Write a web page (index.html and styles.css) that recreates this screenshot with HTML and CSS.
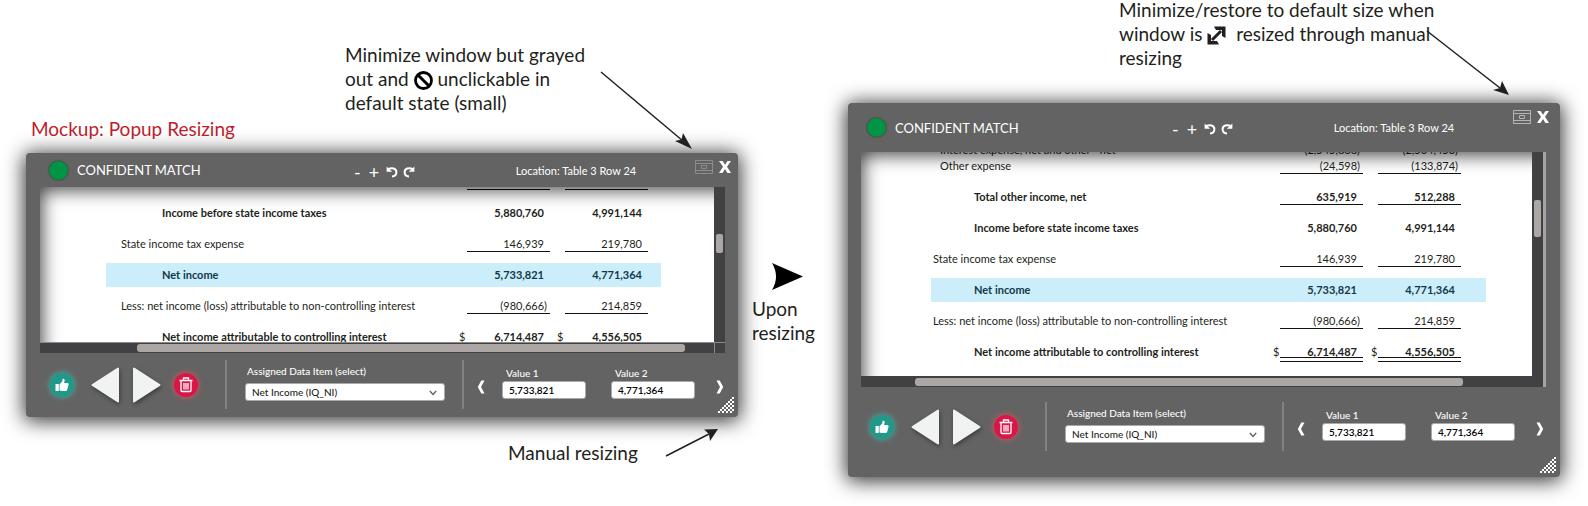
FILE: index.html
```html
<!DOCTYPE html>
<html lang="en">
<head>
<meta charset="utf-8">
<title>Mockup: Popup Resizing</title>
<link rel="stylesheet" href="styles.css">
</head>
<body>
<svg class="sprite" aria-hidden="true">
  <symbol id="undo" viewBox="0 0 12 12"><path d="M2 3.2C6 1.2 10.4 2.4 10.4 6.2 10.4 8.8 8.6 10.2 6 10.4" fill="none" stroke="currentColor" stroke-width="2"/><path d="M.6.6v5.2h5.6z" fill="currentColor"/></symbol>
  <symbol id="redo" viewBox="0 0 12 12"><path d="M10 3.2C6 1.2 1.6 2.4 1.6 6.2 1.6 8.8 3.4 10.2 6 10.4" fill="none" stroke="currentColor" stroke-width="2"/><path d="M11.4.6v5.2H5.8z" fill="currentColor"/></symbol>
  <symbol id="restore" viewBox="0 0 18 14"><path d="M.5.5h17v13H.5zM.5 3.500h17M.5 10.500h17M6.500 5.500h5v3h-5z" fill="none" stroke="currentColor"/></symbol>
  <symbol id="close" viewBox="0 0 12 12"><path d="M0 0h3.600L6 3.700 8.500 0H12L8 5.800 12 12H8.400L6 8 3.500 12H0l4-6.200z" fill="currentColor"/></symbol>
  <symbol id="thumb" viewBox="0 0 14 14"><path d="M.5 6h3.300v7H.5zM4.500 6.200 7.200 3.400 7.600.8C9 .2 10 1.400 9.600 3L9 5h3.300c1.300 0 1.500 1 1.200 2l-1.300 4.800c-.3.900-.8 1.200-1.600 1.200H6.200c-.8 0-1.700-.5-1.700-.9z" fill="currentColor"/></symbol>
  <symbol id="prev" viewBox="0 0 28 36"><path d="M1.500 18 27 1.500v33z" fill="#f1f3f2" stroke="#f1f3f2" stroke-width="2" stroke-linejoin="round"/></symbol>
  <symbol id="next" viewBox="0 0 28 36"><path d="M26.500 18 1 1.500v33z" fill="#f1f3f2" stroke="#f1f3f2" stroke-width="2" stroke-linejoin="round"/></symbol>
  <symbol id="trash" viewBox="0 0 14 16"><path d="M.5 3.500h13M4.500 3V1h5v2M2 4v9.500q0 1 1 1h8q1 0 1-1V4M5 6v6.500M7 6v6.500M9 6v6.500" fill="none" stroke="currentColor" stroke-width="1.300"/></symbol>
  <symbol id="left" viewBox="0 0 8 14"><path d="M7.500.5H4.300L.8 7l3.500 6.500h3.200L4 7z" fill="currentColor"/></symbol>
  <symbol id="right" viewBox="0 0 8 14"><path d="M.5.5h3.200L7.200 7l-3.500 6.500H.5L4 7z" fill="currentColor"/></symbol>
  <symbol id="down" viewBox="0 0 8 6"><path d="M.8 1 4 4.400 7.200 1" fill="none" stroke="currentColor" stroke-width="1.500"/></symbol>
  <symbol id="grip" viewBox="0 0 16 16"><path d="M14 0h2v2h-2zM12 2h2v2h-2zM10 4h2v2h-2zM14 4h2v2h-2zM8 6h2v2H8zM12 6h2v2h-2zM6 8h2v2H6zM10 8h2v2h-2zM14 8h2v2h-2zM4 10h2v2H4zM8 10h2v2H8zM12 10h2v2h-2zM2 12h2v2H2zM6 12h2v2H6zM10 12h2v2h-2zM14 12h2v2h-2zM0 14h2v2H0zM4 14h2v2H4zM8 14h2v2H8zM12 14h2v2h-2z" fill="#fff"/></symbol>
</svg>

<main class="board">
  <section class="stage stage-default">
    <p class="note note-top">Minimize window but grayed<br>out and <svg class="inline-icon" viewBox="0 0 19 19"><path d="M3.500 3.500l12 12" stroke="#000" stroke-width="3"/><circle cx="9.500" cy="9.500" r="8" fill="none" stroke="#000" stroke-width="2.800"/></svg> unclickable in<br>default state (small)</p>
    <h1 class="heading">Mockup: Popup Resizing</h1>
    <article class="popup popup-small">
      <header class="bar">
        <div class="status"><span class="dot"></span><h2 class="title">CONFIDENT MATCH</h2></div>
        <div class="tools">
          <button class="tool" aria-label="Zoom out">-</button>
          <button class="tool plus" aria-label="Zoom in">+</button>
          <button class="tool" aria-label="Rotate left"><svg class="turn"><use href="#undo"/></svg></button>
          <button class="tool" aria-label="Rotate right"><svg class="turn"><use href="#redo"/></svg></button>
        </div>
        <span class="location">Location: Table 3 Row 24</span>
        <div class="controls">
          <button class="control" aria-label="Minimize" disabled><svg class="restore"><use href="#restore"/></svg></button>
          <button class="control" aria-label="Close"><svg class="close"><use href="#close"/></svg></button>
        </div>
      </header>
      <div class="viewer">
        <div class="doc">
          <table class="sheet">
            <colgroup><col class="c-label"><col class="c-cur"><col class="c-num"><col class="c-cur"><col class="c-num"><col></colgroup>
            <tbody>
            <tr class="total"><td></td><td></td><td class="num"><span class="amount line">&nbsp;</span></td><td></td><td class="num"><span class="amount line">&nbsp;</span></td><td></td></tr>
            <tr class="total"><td>Income before state income taxes</td><td></td><td class="num"><span class="amount">5,880,760</span></td><td></td><td class="num"><span class="amount">4,991,144</span></td><td></td></tr>
            <tr><td>State income tax expense</td><td></td><td class="num"><span class="amount line">146,939</span></td><td></td><td class="num"><span class="amount line">219,780</span></td><td></td></tr>
            <tr class="total picked"><td>Net income</td><td></td><td class="num"><span class="amount">5,733,821</span></td><td></td><td class="num"><span class="amount">4,771,364</span></td><td></td></tr>
            <tr><td>Less: net income (loss) attributable to non-controlling interest</td><td></td><td class="num"><span class="amount line neg">(980,666)</span></td><td></td><td class="num"><span class="amount line">214,859</span></td><td></td></tr>
            <tr class="total"><td>Net income attributable to controlling interest</td><td class="cur">$</td><td class="num"><span class="amount double">6,714,487</span></td><td class="cur">$</td><td class="num"><span class="amount double">4,556,505</span></td><td></td></tr>
            </tbody>
          </table>
        </div>
        <div class="vtrack"><div class="vthumb"></div></div>
        <div class="htrack"><div class="hthumb"></div></div>
        <div class="corner"></div>
      </div>
      <footer class="actions">
        <div class="buttons">
          <button class="round ok" aria-label="Accept"><svg class="i-thumb"><use href="#thumb"/></svg></button>
          <button class="step" aria-label="Previous"><svg class="i-step"><use href="#prev"/></svg></button>
          <button class="step" aria-label="Next"><svg class="i-step"><use href="#next"/></svg></button>
          <button class="round remove" aria-label="Delete"><svg class="i-trash"><use href="#trash"/></svg></button>
        </div>
        <div class="assign">
          <label class="caption" for="item-a">Assigned Data Item (select)</label>
          <div class="picker"><select class="field" id="item-a"><option>Net Income (IQ_NI)</option></select><svg class="caret"><use href="#down"/></svg></div>
        </div>
        <div class="values">
          <button class="nav" aria-label="Previous value"><svg class="i-nav"><use href="#left"/></svg></button>
          <div class="value"><label class="caption" for="v1-a">Value 1</label><input class="field strong" id="v1-a" value="5,733,821"></div>
          <div class="value"><label class="caption" for="v2-a">Value 2</label><input class="field strong" id="v2-a" value="4,771,364"></div>
          <button class="nav" aria-label="Next value"><svg class="i-nav"><use href="#right"/></svg></button>
        </div>
      </footer>
      <svg class="grip"><use href="#grip"/></svg>
    </article>
    <p class="note note-bottom">Manual resizing</p>
    <svg class="pointer pointer-min" viewBox="0 0 94 80"><path d="M1 2l82 69" stroke="#231f20" stroke-width="1.500"/><path d="M92 79 75 71 81.500 69.500 83 63z" fill="#231f20"/></svg>
    <svg class="pointer pointer-grip" viewBox="0 0 54 30"><path d="M1 28 44 6" stroke="#231f20" stroke-width="1.500"/><path d="M53 1 39 1.500 44 6 45 13z" fill="#231f20"/></svg>
  </section>

  <section class="between">
    <svg class="becomes" viewBox="0 0 31 27"><path d="M0 0 31 13.500 0 27Q8 13.500 0 0z"/></svg>
    <p class="note">Upon<br>resizing</p>
  </section>

  <section class="stage stage-resized">
    <p class="note note-restore">Minimize/restore to default size when<br>window is <svg class="inline-icon" viewBox="0 0 19 19"><path d="M5 14 14 5" stroke="#231f20" stroke-width="3"/><path d="M7 .500h11.500V12l-3.500-2V4H9zM.500 7l3.500 2v6h6l2 3.500H.500z" fill="#231f20"/></svg>&nbsp; resized through manual<br>resizing</p>
    <article class="popup popup-large">
      <header class="bar">
        <div class="status"><span class="dot"></span><h2 class="title">CONFIDENT MATCH</h2></div>
        <div class="tools">
          <button class="tool" aria-label="Zoom out">-</button>
          <button class="tool plus" aria-label="Zoom in">+</button>
          <button class="tool" aria-label="Rotate left"><svg class="turn"><use href="#undo"/></svg></button>
          <button class="tool" aria-label="Rotate right"><svg class="turn"><use href="#redo"/></svg></button>
        </div>
        <span class="location">Location: Table 3 Row 24</span>
        <div class="controls">
          <button class="control" aria-label="Restore default size"><svg class="restore"><use href="#restore"/></svg></button>
          <button class="control" aria-label="Close"><svg class="close"><use href="#close"/></svg></button>
        </div>
      </header>
      <div class="viewer">
        <div class="doc">
          <table class="sheet">
            <colgroup><col class="c-label"><col class="c-cur"><col class="c-num"><col class="c-cur"><col class="c-num"><col></colgroup>
            <tbody>
            <tr class="tight sub"><td>Interest expense, net and other - net</td><td></td><td class="num"><span class="amount neg">(2,545,868)</span></td><td></td><td class="num"><span class="amount neg">(2,504,453)</span></td><td></td></tr>
            <tr class="short sub"><td>Other expense</td><td></td><td class="num"><span class="amount line neg">(24,598)</span></td><td></td><td class="num"><span class="amount line neg">(133,874)</span></td><td></td></tr>
            <tr class="total"><td>Total other income, net</td><td></td><td class="num"><span class="amount line">635,919</span></td><td></td><td class="num"><span class="amount line">512,288</span></td><td></td></tr>
            <tr class="total"><td>Income before state income taxes</td><td></td><td class="num"><span class="amount">5,880,760</span></td><td></td><td class="num"><span class="amount">4,991,144</span></td><td></td></tr>
            <tr><td>State income tax expense</td><td></td><td class="num"><span class="amount line">146,939</span></td><td></td><td class="num"><span class="amount line">219,780</span></td><td></td></tr>
            <tr class="total picked"><td>Net income</td><td></td><td class="num"><span class="amount">5,733,821</span></td><td></td><td class="num"><span class="amount">4,771,364</span></td><td></td></tr>
            <tr><td>Less: net income (loss) attributable to non-controlling interest</td><td></td><td class="num"><span class="amount line neg">(980,666)</span></td><td></td><td class="num"><span class="amount line">214,859</span></td><td></td></tr>
            <tr class="total"><td>Net income attributable to controlling interest</td><td class="cur">$</td><td class="num"><span class="amount double">6,714,487</span></td><td class="cur">$</td><td class="num"><span class="amount double">4,556,505</span></td><td></td></tr>
            </tbody>
          </table>
        </div>
        <div class="vtrack"><div class="vthumb"></div></div>
        <div class="htrack"><div class="hthumb"></div></div>
        <div class="corner"></div>
      </div>
      <footer class="actions">
        <div class="buttons">
          <button class="round ok" aria-label="Accept"><svg class="i-thumb"><use href="#thumb"/></svg></button>
          <button class="step" aria-label="Previous"><svg class="i-step"><use href="#prev"/></svg></button>
          <button class="step" aria-label="Next"><svg class="i-step"><use href="#next"/></svg></button>
          <button class="round remove" aria-label="Delete"><svg class="i-trash"><use href="#trash"/></svg></button>
        </div>
        <div class="assign">
          <label class="caption" for="item-b">Assigned Data Item (select)</label>
          <div class="picker"><select class="field" id="item-b"><option>Net Income (IQ_NI)</option></select><svg class="caret"><use href="#down"/></svg></div>
        </div>
        <div class="values">
          <button class="nav" aria-label="Previous value"><svg class="i-nav"><use href="#left"/></svg></button>
          <div class="value"><label class="caption" for="v1-b">Value 1</label><input class="field strong" id="v1-b" value="5,733,821"></div>
          <div class="value"><label class="caption" for="v2-b">Value 2</label><input class="field strong" id="v2-b" value="4,771,364"></div>
          <button class="nav" aria-label="Next value"><svg class="i-nav"><use href="#right"/></svg></button>
        </div>
      </footer>
      <svg class="grip"><use href="#grip"/></svg>
    </article>
    <svg class="pointer pointer-restore" viewBox="0 0 86 67"><path d="M1 1l73 57" stroke="#231f20" stroke-width="1.500"/><path d="M83 65 67 60 74 58 76 51z" fill="#231f20"/></svg>
  </section>
</main>
</body>
</html>
```
FILE: styles.css
```css
* { box-sizing: border-box; }
body {
  margin: 0;
  background: #fff;
  color: #231f20;
  font-family: Lato, "Open Sans", sans-serif;
}
button {
  margin: 0;
  padding: 0;
  border: 0;
  background: none;
  color: inherit;
  font: inherit;
  display: flex;
  align-items: center;
  justify-content: center;
}
svg { display: block; flex: none; overflow: visible; }
.sprite { position: absolute; width: 0; height: 0; }

.board {
  display: grid;
  grid-template-columns: minmax(0, 1fr) 110px minmax(0, 1fr);
  padding: 0 28px 28px 26px;
}
.stage { position: relative; }
.stage-default { padding-top: 43px; }
.note {
  margin: 0;
  font-size: 19px;
  line-height: 24px;
  white-space: nowrap;
}
.note-top { margin-left: 319px; }
.note-restore { margin: -2px 0 33px 271px; }
.note-bottom { margin: 24px 0 0 482px; }
.inline-icon {
  display: inline-block;
  width: 19px;
  height: 19px;
  vertical-align: -4px;
}
.heading {
  margin: 2px 0 12px 5px;
  color: #be1e2d;
  font-size: 19px;
  font-weight: 400;
  line-height: 24px;
}
.pointer { position: absolute; fill: none; }
.pointer-min { top: 70px; right: 44px; width: 94px; height: 80px; }
.pointer-grip { top: 428px; right: 19px; width: 54px; height: 30px; }
.pointer-restore { top: 30px; right: 48px; width: 86px; height: 67px; }
.between { padding: 263px 0 0 14px; }
.becomes { width: 31px; height: 27px; margin: 0 0 7px 20px; }

.popup {
  position: relative;
  border-radius: 4px;
  background: #636363;
  box-shadow: 0 2px 20px 2px rgba(0, 0, 0, .8);
}
.bar {
  display: grid;
  grid-template-columns: 304fr 162fr 179fr 43fr;
  align-items: center;
  height: 34px;
  padding-left: 23px;
  color: #fff;
}
.popup-large .bar { height: 49px; padding: 0 4px 0 19px; }
.status { display: flex; align-items: center; gap: 9px; }
.dot {
  width: 19px;
  height: 19px;
  border-radius: 50%;
  background: #009444;
  box-shadow: 0 0 2px rgba(0, 0, 0, .6);
}
.title { margin: 0; font-size: 13px; font-weight: 400; line-height: 20px; white-space: nowrap; }
.tools { display: flex; align-items: center; gap: 5px; padding-top: 3px; }
.tool { min-width: 8px; height: 16px; font-size: 18px; line-height: 16px; }
.plus { min-width: 15px; }
.turn { width: 12px; height: 12px; }
.location { padding-top: 1px; font-size: 11px; line-height: 16px; white-space: nowrap; }
.controls { display: flex; align-self: start; align-items: center; gap: 6px; padding-top: 7px; }
.restore { width: 18px; height: 14px; color: #b5b5b5; }
.control:disabled .restore { color: #8c8c8c; }
.close { width: 12px; height: 12px; }

.viewer {
  display: grid;
  grid-template-columns: minmax(0, 1fr) 11px;
  grid-template-rows: 155px 11px;
  margin: 0 13px 0 14px;
}
.popup-large .viewer {
  grid-template-rows: 224px 11px;
  margin: 0 14px 0 13px;
  border-right: 3px solid #a5a5a5;
}
.doc { position: relative; overflow: hidden; background: #fff; }
.doc::after {
  content: "";
  position: absolute;
  inset: 0 -20px -20px 0;
  box-shadow: inset 2px 3px 18px rgba(0, 0, 0, .75);
  pointer-events: none;
}
.sheet {
  width: 555px;
  margin: -21px 0 0 66px;
  table-layout: fixed;
  border-collapse: collapse;
  font-size: 11px;
  line-height: 16px;
}
.popup-large .sheet { margin: -10px 0 0 70px; }
.c-label { width: 346px; }
.popup-large .c-label { width: 334px; }
.c-cur { width: 15px; }
.c-num { width: 83px; }
.sheet tr { height: 31px; }
.sheet td { padding: 0; white-space: nowrap; }
.sheet td:first-child { padding-left: 15px; }
.sheet .total td:first-child { padding-left: 56px; }
.popup-large .sheet td:first-child { padding-left: 2px; }
.popup-large .sheet .total td:first-child { padding-left: 43px; }
.popup-large .sheet .sub td:first-child { padding-left: 9px; }
.total { font-weight: 700; }
.sheet .tight { height: 16px; }
.sheet .short { height: 23px; }
.short td { vertical-align: top; }
.sheet .cur { padding-left: 8px; font-weight: 400; }
.popup-small .sheet .cur { padding-left: 7px; }
.picked td { color: #12394a; background: linear-gradient(#cbeefa, #cbeefa) center / 100% 24px no-repeat; }
.num { text-align: right; }
.amount { position: relative; display: block; padding-right: 6px; }
.neg { padding-right: 3px; }
.line::after, .double::after {
  content: "";
  position: absolute;
  inset: auto 0 0 0;
  height: 1px;
  background: #111;
}
.double::after {
  bottom: -2px;
  height: 3px;
  border: solid #111;
  border-width: 1px 0;
  background: none;
}
.vtrack, .htrack, .corner { background: #414042; }
.htrack { border-top: 1px solid #8a8a8a; }
.popup-small .corner { border: solid #8a8a8a; border-width: 1px 0 0 1px; }
.vtrack { padding: 47px 2px 0; }
.popup-large .vtrack { padding-top: 48px; }
.vthumb { height: 19px; border-radius: 2px; background: #aca7a4; }
.popup-large .vthumb { height: 37px; }
.htrack { padding: 1px 0 0 97px; }
.popup-large .htrack { padding-left: 54px; border-top-color: #414042; }
.hthumb { width: 548px; max-width: 100%; height: 8px; border-radius: 3px; background: #aca7a4; }

.actions {
  display: grid;
  grid-template-columns: 175fr 239fr 274fr;
  padding: 7px 0 7px 24px;
  color: #fff;
}
.popup-large .actions { padding: 15px 2px 25px 22px; }
.buttons { display: flex; align-items: center; height: 50px; }
.round {
  width: 24px;
  height: 24px;
  border-radius: 50%;
}
.ok { background: #20998b; box-shadow: 0 0 6px #45b5a6; }
.remove { margin-left: 13px; background: #d91647; box-shadow: 0 0 6px #e0555a; }
.i-thumb { width: 14px; height: 14px; }
.i-trash { width: 14px; height: 16px; }
.step { margin-left: 14px; filter: drop-shadow(1px 2px 2px rgba(0, 0, 0, .4)); }
.ok + .step { margin-left: 17px; }
.i-step { width: 28px; height: 36px; }
.assign {
  height: 49px;
  padding: 3px 17px 0 18px;
  border: solid #808288;
  border-width: 0 2px;
}
.caption {
  display: block;
  padding-left: 2px;
  font-size: 10px;
  font-weight: 500;
  line-height: 16px;
  white-space: nowrap;
}
.picker { position: relative; margin-top: 4px; }
.field {
  display: block;
  width: 100%;
  height: 18px;
  padding: 0 6px;
  border: 1px solid #a7a9ac;
  border-radius: 3px;
  background: #fff;
  color: #231f20;
  font: 500 10px/16px Lato, "Open Sans", sans-serif;
  appearance: none;
  outline: 0;
}
.strong { color: #000; font-weight: 600; }
.caret { position: absolute; right: 8px; top: 7px; width: 8px; height: 6px; color: #666; pointer-events: none; }
.values { display: flex; align-items: flex-start; padding: 5px 0 0 13px; }
.value { width: 84px; }
.value .caption { padding-left: 4px; }
.nav { margin-top: 15px; }
.nav + .value { margin-left: 17px; }
.value + .value { margin-left: 25px; }
.value + .nav { margin-left: 21px; }
.i-nav { width: 8px; height: 14px; }
.grip { position: absolute; right: 4px; bottom: 4px; width: 16px; height: 16px; }
```
